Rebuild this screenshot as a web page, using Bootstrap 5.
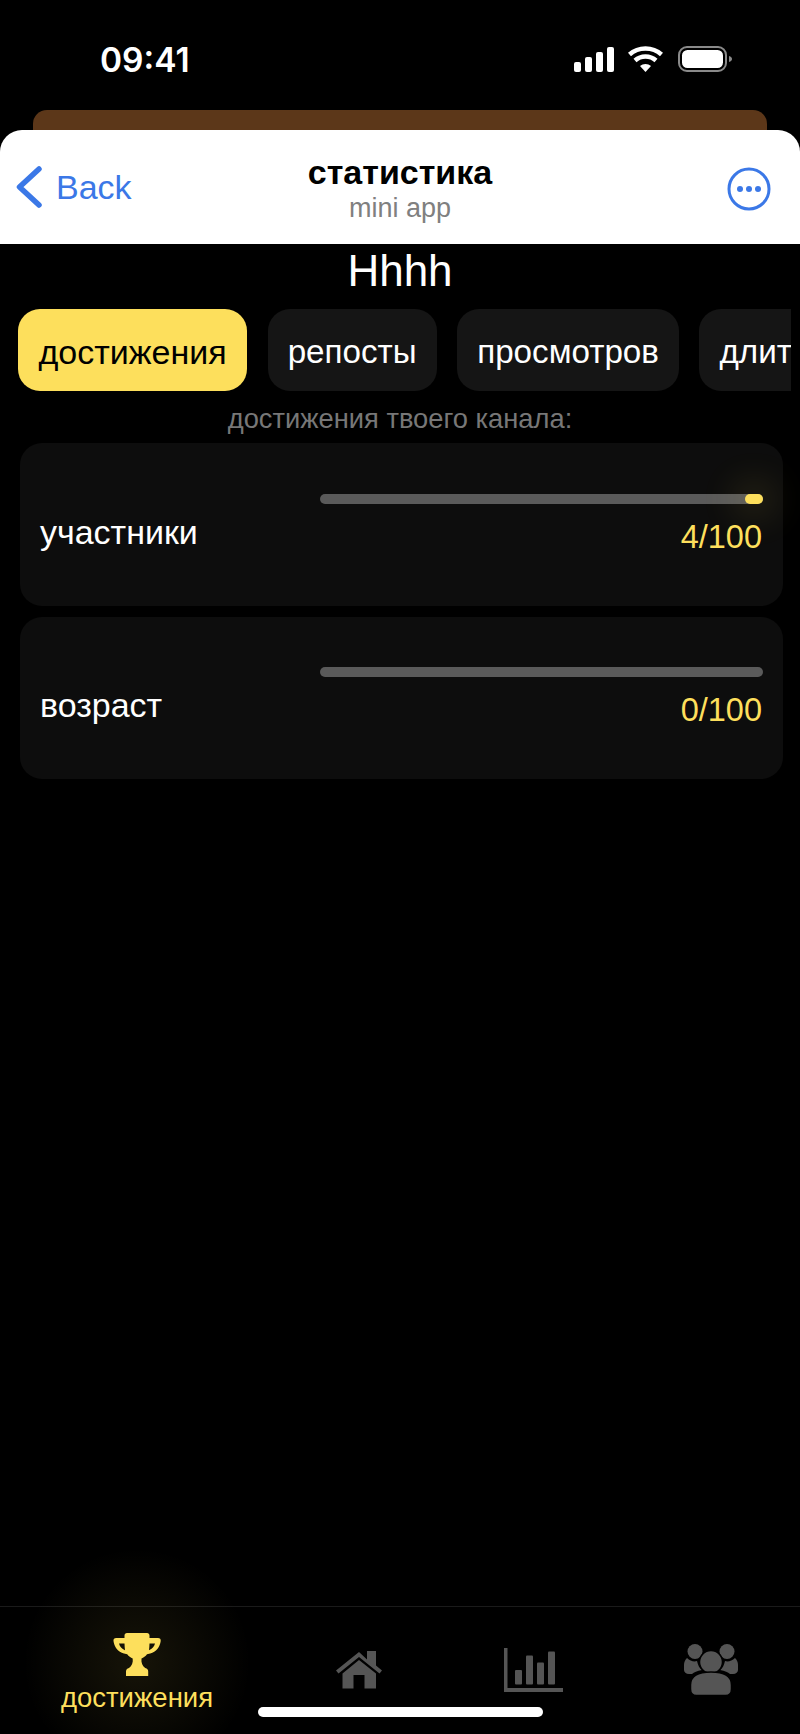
<!DOCTYPE html>
<html lang="ru">
<head>
    <meta charset="UTF-8">
    <meta name="viewport" content="width=device-width, initial-scale=1.0">
    <title>статистика</title>
    <link href="https://cdn.jsdelivr.net/npm/bootstrap@5.3.0/dist/css/bootstrap.min.css" rel="stylesheet">
    <style>
        html, body { height: 100%; }
        body {
            background: #000;
            color: #fff;
            font-family: "Liberation Sans", Arial, sans-serif;
            overflow: hidden;
        }
        .app-screen { height: 1734px; width: 800px; }
        .status-line { height: 110px; padding: 42px 66px 0 100px; }
        .status-time { font-family: Inter, "Liberation Sans", sans-serif; font-weight: 600; font-size: 33.5px; line-height: 36px; }
        .status-icons { margin-top: 4px; }
        .sheet-behind { height: 20px; margin: 0 33px; background: #5c3719; border-radius: 14px 14px 0 0; }
        .tg-header { height: 114px; background: #fff; border-radius: 22px 22px 0 0; padding: 0 16px; }
        .tg-back { color: #3b78e7; font-size: 34px; width: 200px; }
        .tg-back svg { margin-right: 14px; }
        .tg-heading { padding-top: 4px; }
        .tg-title { color: #000; font-weight: 700; font-size: 34px; line-height: 36px; }
        .tg-sub { color: #808080; font-size: 27px; line-height: 32px; margin-top: 2px; }
        .tg-more { width: 200px; padding: 3px 13px 0 0; }
        .page-name { font-size: 44px; line-height: 50px; margin: 2px 0 0; font-weight: 400; }
        .tab-strip { margin: 13px 9px 0 18px; overflow: hidden; gap: 20.500px; }
        .tab-chip {
            flex: none; height: 82px; padding: 3px 20px 0; border: 0; border-radius: 22px;
            background: #151515; color: #fff; font-size: 33.200px; line-height: 1;
        }
        .tab-chip.is-active { background: #fddf5c; color: #000; font-size: 34px; padding: 3px 20.500px 0; }
        .tab-hint { color: #777; font-size: 27.300px; line-height: 30px; margin: 13px 0 0; }
        .stat-list { margin: 9px 17px 0 20px; gap: 11px; }
        .stat-card { height: 162.500px; background: #0d0d0d; border: 0; border-radius: 22px; padding: 0 20px; }
        .stat-name { font-size: 34px; padding-top: 16px; }
        .stat-side { width: 443px; }
        .stat-track { height: 10px; background: #5a5a5a; border-radius: 5px; overflow: visible; }
        .stat-fill { background: #fddf5c; border-radius: 5px; }
        .stat-fill.is-lit { box-shadow: 0 0 36px 12px rgba(253, 223, 92, .12); }
        .stat-value { color: #fddf5c; font-size: 32.500px; line-height: 36px; margin-top: 15px; margin-right: 1px; }
        .bottom-tabs {
            position: relative; height: 128px; margin-top: auto; border-top: 1px solid #1a1a1a;
            display: grid; grid-template-columns: 274px 170px 178px 178px;
        }
        .bottom-item { position: relative; color: #555; }
        .bottom-item svg, .bottom-label { position: relative; }
        .bottom-item.is-active { color: #fddf5c; padding-top: 25px; }
        .bottom-item.is-active::before {
            content: ""; position: absolute; left: 22px; top: -60px; width: 230px; height: 230px;
            background: radial-gradient(circle, rgba(253, 223, 92, .09), rgba(253, 223, 92, 0) 70%);
        }
        .item-home { padding-top: 44px; }
        .item-chart { padding-top: 41px; }
        .item-people { padding-top: 37px; }
        .bottom-label { font-size: 27.500px; line-height: 28px; margin-top: 7px; }
        .home-bar { position: absolute; left: 258px; top: 100px; width: 285px; height: 10px; background: #fff; border-radius: 5px; }
    </style>
</head>
<body>
    <div class="app-screen d-flex flex-column">
        <!-- status bar -->
        <div class="status-line d-flex justify-content-between align-items-start">
            <span class="status-time">09:41</span>
            <div class="status-icons d-flex">
                <svg width="160" height="28" viewBox="574 46 160 28">
                    <rect x="574" y="62" width="7" height="10" rx="2" fill="#fff"/>
                    <rect x="585" y="57" width="7" height="15" rx="2" fill="#fff"/>
                    <rect x="596" y="52" width="7" height="20" rx="2" fill="#fff"/>
                    <rect x="607" y="47" width="7" height="25" rx="2" fill="#fff"/>
                    <path d="M645.500 72l-5.500-6c3-2.800 8-2.800 11 0z" fill="#fff"/>
                    <path d="M635 60.500c6-5.400 15-5.400 21 0" fill="none" stroke="#fff" stroke-width="4.500"/>
                    <path d="M629.500 54.500c9-8 23-8 32 0" fill="none" stroke="#fff" stroke-width="4.500"/>
                    <rect x="679" y="47" width="47" height="24" rx="8" fill="none" stroke="#8a8a8a" stroke-width="2"/>
                    <rect x="682" y="50" width="41" height="18" rx="5.500" fill="#fff"/>
                    <path d="M729 56c2 .5 3 1.800 3 3s-1 2.500-3 3z" fill="#8a8a8a"/>
                </svg>
            </div>
        </div>

        <div class="sheet-behind"></div>

        <!-- telegram header -->
        <header class="tg-header d-flex justify-content-between align-items-center">
            <div class="tg-back d-flex align-items-center">
                <svg width="26" height="42" viewBox="0 0 26 42">
                    <path d="M23 3L3.500 21 23 39" fill="none" stroke="#3b78e7" stroke-width="5.500" stroke-linecap="round" stroke-linejoin="round"/>
                </svg>
                <span>Back</span>
            </div>
            <div class="tg-heading text-center">
                <div class="tg-title">статистика</div>
                <div class="tg-sub">mini app</div>
            </div>
            <div class="tg-more d-flex justify-content-end">
                <svg width="44" height="44" viewBox="0 0 44 44">
                    <circle cx="22" cy="22" r="20" fill="none" stroke="#3b78e7" stroke-width="3"/>
                    <circle cx="13" cy="22" r="3" fill="#3b78e7"/>
                    <circle cx="22" cy="22" r="3" fill="#3b78e7"/>
                    <circle cx="31" cy="22" r="3" fill="#3b78e7"/>
                </svg>
            </div>
        </header>

        <h1 class="page-name text-center">Hhhh</h1>

        <div class="tab-strip d-flex">
            <button class="tab-chip is-active">достижения</button>
            <button class="tab-chip">репосты</button>
            <button class="tab-chip">просмотров</button>
            <button class="tab-chip">длительность</button>
        </div>

        <p class="tab-hint text-center">достижения твоего канала:</p>

        <div class="stat-list d-flex flex-column">
            <div class="card stat-card text-white flex-row justify-content-between align-items-center">
                <div class="stat-name">участники</div>
                <div class="stat-side">
                    <div class="progress stat-track justify-content-end">
                        <div class="progress-bar stat-fill is-lit" style="width: 4%"></div>
                    </div>
                    <div class="stat-value text-end">4/100</div>
                </div>
            </div>
            <div class="card stat-card text-white flex-row justify-content-between align-items-center">
                <div class="stat-name">возраст</div>
                <div class="stat-side">
                    <div class="progress stat-track justify-content-end">
                        <div class="progress-bar stat-fill" style="width: 0%"></div>
                    </div>
                    <div class="stat-value text-end">0/100</div>
                </div>
            </div>
        </div>

        <!-- bottom tabs -->
        <nav class="bottom-tabs">
            <div class="bottom-item is-active text-center">
                <svg width="48" height="45" viewBox="0 0 48 45" class="d-block mx-auto">
                    <path fill="#fddf5c" d="M14 1h20c1.500 0 2.500 1 2.500 2.500V6h8.500c1.800 0 3 1.300 2.700 3-.8 6-4.500 11-10.500 12.500l-3.200.8c-1.500 2-3.500 3.400-5.500 4.200-.5 4 .8 7.500 3.700 9.500 2 .6 3 1.400 3 3.500V44H13v-4.500c0-2.100 1-2.900 3-3.500 2.900-2 4.200-5.500 3.700-9.500-2-.8-4-2.200-5.500-4.200l-3.200-.8C5 20 1.300 15 .5 9c-.3-1.700.9-3 2.700-3h8.300V3.500C11.500 2 12.500 1 14 1zM6 11.500c.8 3 2.800 5.500 6 6.700-.3-2.200-.4-4.400-.5-6.700zm36 0h-5.500c-.1 2.300-.2 4.500-.5 6.700 3.200-1.200 5.200-3.700 6-6.700z"/>
                </svg>
                <div class="bottom-label">достижения</div>
            </div>
            <div class="bottom-item item-home">
                <svg width="46" height="38" viewBox="0 0 46 38" class="d-block mx-auto">
                    <path fill="#555" d="M23 1L0 19.500l2.500 3L23 6l20.500 16.500 2.500-3-6-4.900V0h-9v8.500z"/>
                    <path fill="#555" d="M23 9L40 22.600V37.500H28.500V24h-11v13.500H6.500V22.600z"/>
                </svg>
            </div>
            <div class="bottom-item item-chart">
                <svg width="59" height="44" viewBox="0 0 59 44" class="d-block mx-auto">
                    <path fill="#555" d="M0 0h3.500v40H59v4H0z"/>
                    <rect x="11" y="22" width="7" height="14.500" rx="1" fill="#555"/>
                    <rect x="22" y="7.500" width="7" height="29" rx="1" fill="#555"/>
                    <rect x="33" y="14.500" width="7" height="22" rx="1" fill="#555"/>
                    <rect x="44" y="3.500" width="7" height="33" rx="1" fill="#555"/>
                </svg>
            </div>
            <div class="bottom-item item-people">
                <svg width="54" height="51" viewBox="0 0 54 51" class="d-block mx-auto">
                    <circle cx="11" cy="7.500" r="7.500" fill="#555"/>
                    <circle cx="43" cy="7.500" r="7.500" fill="#555"/>
                    <path fill="#555" d="M3 14c3 3 7 4 10 3 1 4 2 7 5 9-5 1-8 2-10 4H5c-3 0-5-2-5-4v-5c0-3 1-5 3-7z"/>
                    <path fill="#555" d="M51 14c-3 3-7 4-10 3-1 4-2 7-5 9 5 1 8 2 10 4h3c3 0 5-2 5-4v-5c0-3-1-5-3-7z"/>
                    <circle cx="27" cy="18" r="11.500" fill="#555" stroke="#000" stroke-width="1.500"/>
                    <path fill="#555" stroke="#000" stroke-width="1.500" d="M6.500 41c0-9 8-13 20.500-13s20.500 4 20.500 13v4c0 4-2 6.500-6 6.500H12.500c-4 0-6-2.500-6-6.500z"/>
                </svg>
            </div>
            <div class="home-bar"></div>
        </nav>
    </div>
    <script src="https://cdn.jsdelivr.net/npm/bootstrap@5.3.0/dist/js/bootstrap.bundle.min.js"></script>
</body>
</html>
